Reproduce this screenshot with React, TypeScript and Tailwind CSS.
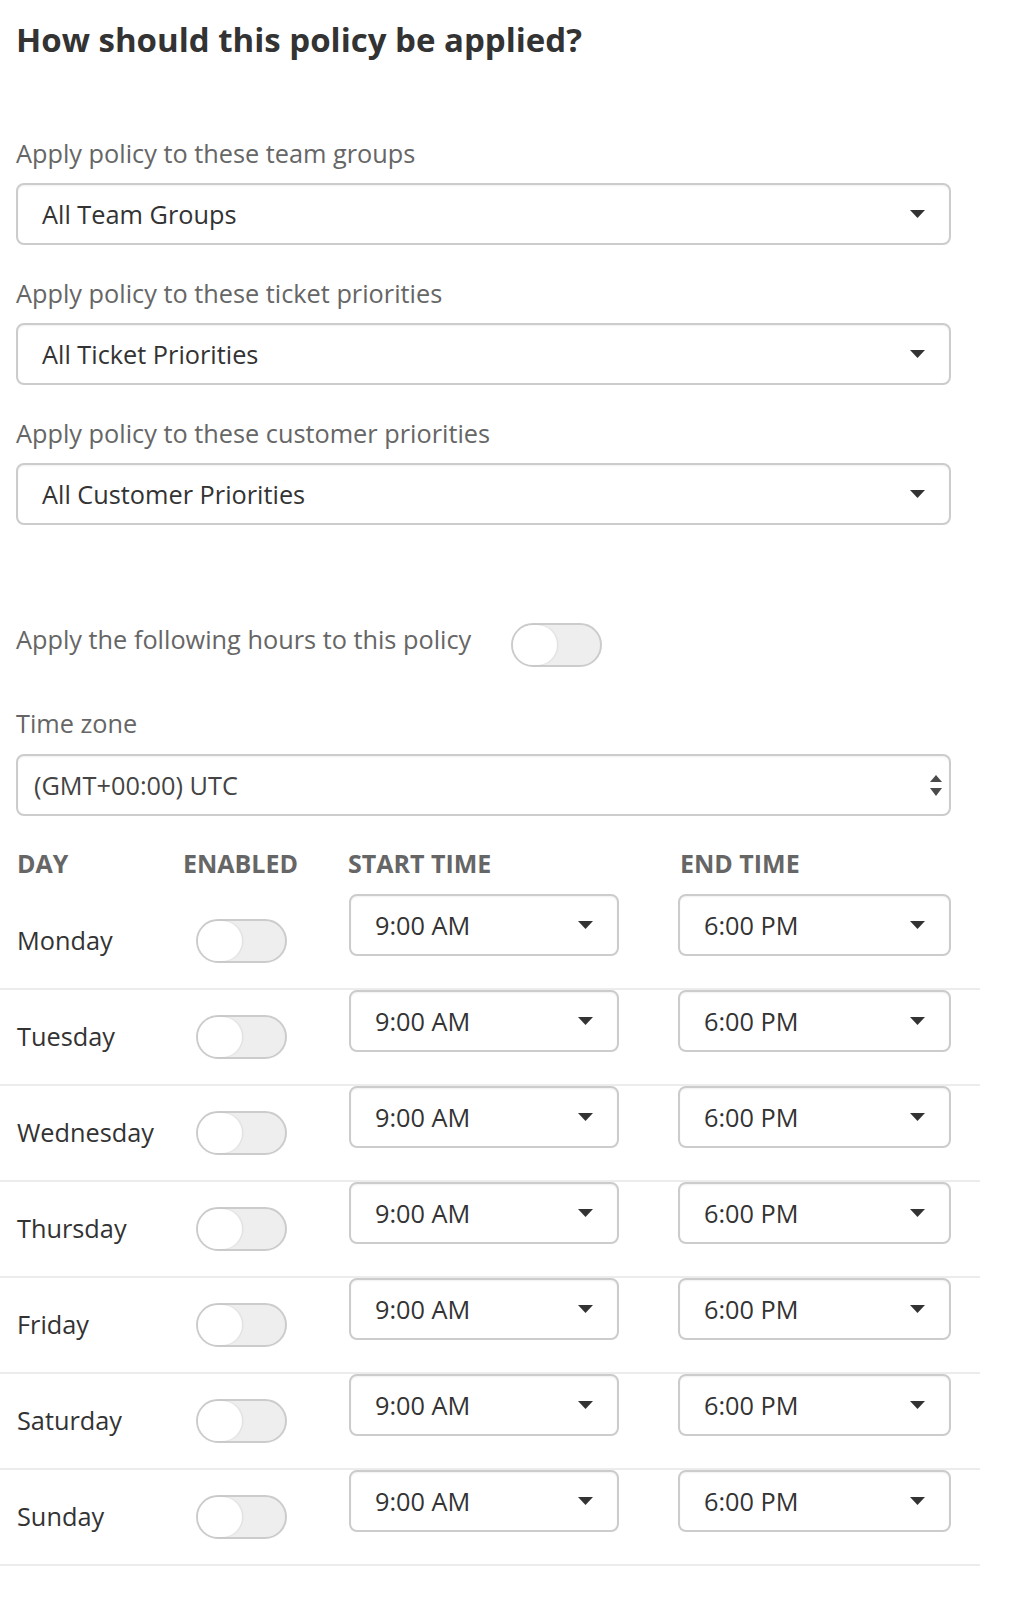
import React from "react";

function Caret() {
  return (
    <svg width="15" height="8" viewBox="0 0 15 8" className="shrink-0">
      <path d="M0 0H15L7.5 8Z" fill="#333333" />
    </svg>
  );
}

function Dropdown({ value }: { value: string }) {
  return (
    <div className="flex h-[62px] w-full items-center justify-between rounded-[8px] border-2 border-[#cccccc] bg-white pl-[24px] pr-[24px] shadow-[inset_0_1px_2px_rgba(0,0,0,0.06)]">
      <span className="text-[25.3px] leading-[34px] text-[#333333]">{value}</span>
      <Caret />
    </div>
  );
}

function Toggle() {
  return (
    <div className="flex h-[44px] w-[91px] shrink-0 items-center rounded-full border-2 border-[#cccccc] bg-[#eeeeee]">
      <div className="h-[40px] w-[44px] rounded-full bg-white shadow-[1px_0_2px_rgba(0,0,0,0.08)]" />
    </div>
  );
}

function Label({ children, className = "" }: { children: React.ReactNode; className?: string }) {
  return <div className={`text-[25.3px] leading-[36px] text-[#666666] ${className}`}>{children}</div>;
}

const days = ["Monday", "Tuesday", "Wednesday", "Thursday", "Friday", "Saturday", "Sunday"];

export default function App() {
  return (
    <div className="min-h-[1604px] w-[1030px] bg-white font-['Open_Sans',sans-serif]">
      <div className="w-[980px]">
        <div className="pl-[16px] pr-[29px]">
          <h1 className="pt-[20px] text-[33px] font-bold leading-[40px] text-[#333333]">
            How should this policy be applied?
          </h1>

          <Label className="mt-[75px]">Apply policy to these team groups</Label>
          <div className="mt-[12px]">
            <Dropdown value="All Team Groups" />
          </div>

          <Label className="mt-[30px]">Apply policy to these ticket priorities</Label>
          <div className="mt-[12px]">
            <Dropdown value="All Ticket Priorities" />
          </div>

          <Label className="mt-[30px]">Apply policy to these customer priorities</Label>
          <div className="mt-[12px]">
            <Dropdown value="All Customer Priorities" />
          </div>

          <div className="mt-[98px] flex h-[44px] items-center gap-[40px]">
            <Label className="pb-[13px]">Apply the following hours to this policy</Label>
            <Toggle />
          </div>

          <Label className="mt-[38px]">Time zone</Label>
          <div className="mt-[13px] flex h-[62px] w-full items-center justify-between rounded-[8px] border-2 border-[#cccccc] bg-white pl-[16px] pr-[7px] shadow-[inset_0_1px_2px_rgba(0,0,0,0.06)]">
            <span className="text-[25.3px] leading-[34px] text-[#444444]">(GMT+00:00) UTC</span>
            <svg width="12" height="21" viewBox="0 0 12 21">
              <path d="M6 0L12 7H0Z" fill="#4a4a4a" />
              <path d="M0 13H12L6 21Z" fill="#4a4a4a" />
            </svg>
          </div>
        </div>

        <div className="mt-[31px] grid grid-cols-[183px_165px_332px_300px] text-[25px] font-bold uppercase leading-[32px] text-[#666666]">
          <div className="pl-[17px]">Day</div>
          <div>Enabled</div>
          <div>Start Time</div>
          <div>End Time</div>
        </div>

        <div className="mt-[15px]">
          {days.map((d) => (
            <div
              key={d}
              className="grid h-[96px] grid-cols-[183px_165px_330px_302px] border-b-2 border-[#ececec]"
            >
              <div className="self-center pl-[17px] pb-[2px] text-[25.3px] leading-[34px] text-[#333333]">{d}</div>
              <div className="self-center pl-[13px]">
                <Toggle />
              </div>
              <div className="self-start pl-[1px] pr-[59px]">
                <Dropdown value="9:00 AM" />
              </div>
              <div className="self-start pr-[29px]">
                <Dropdown value="6:00 PM" />
              </div>
            </div>
          ))}
        </div>
      </div>
    </div>
  );
}
